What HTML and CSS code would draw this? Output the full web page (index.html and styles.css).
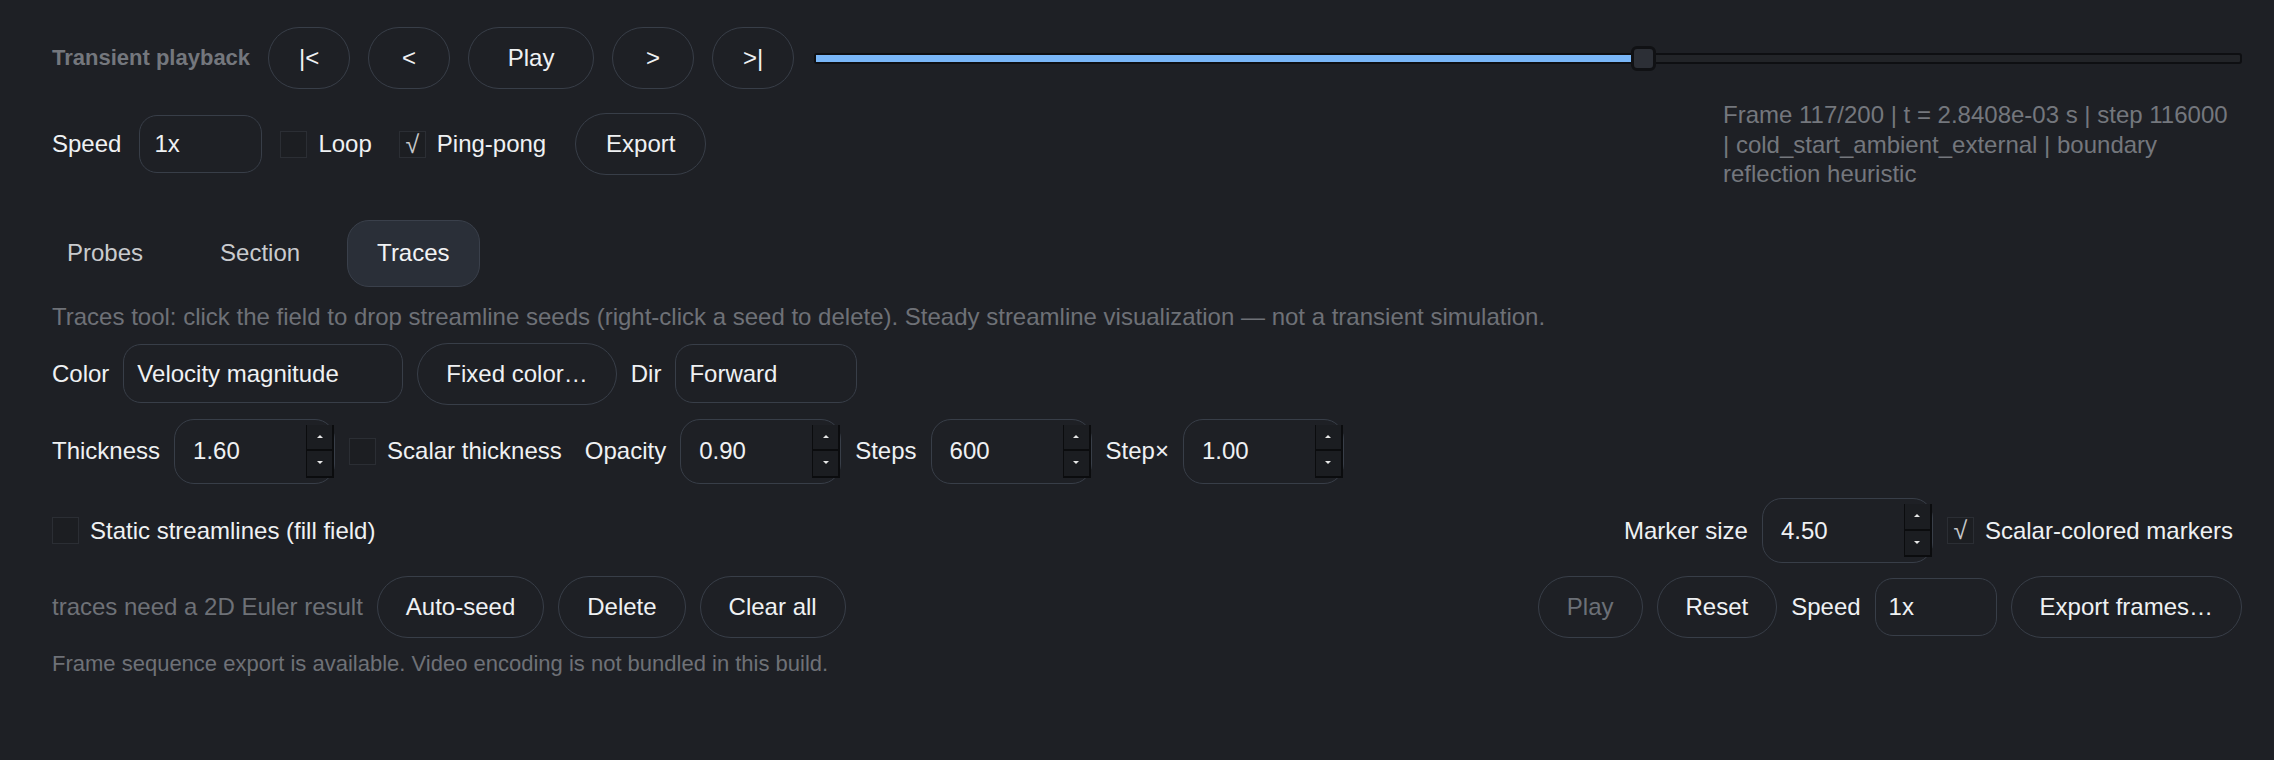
FILE: index.html
```html
<!DOCTYPE html>
<html lang="en">
<head>
    <meta charset="UTF-8">
    <title>Transient playback</title>
    <link rel="stylesheet" href="styles.css">
</head>
<body>
    <div class="panel">
        <div class="playback">
            <span class="pb-title">Transient playback</span>
            <button class="btn btn-sq">|&lt;</button>
            <button class="btn btn-sq">&lt;</button>
            <button class="btn btn-play">Play</button>
            <button class="btn btn-sq">&gt;</button>
            <button class="btn btn-sq">&gt;|</button>
            <div class="scrub">
                <div class="scrub-fill" style="width: 57.2%"></div>
                <div class="scrub-thumb" style="left: 57.2%"></div>
            </div>
        </div>

        <div class="row row-speed">
            <span class="lbl">Speed</span>
            <input class="field field-speed" type="text" value="1x">
            <label class="check"><span class="box"></span>Loop</label>
            <label class="check"><span class="box">√</span>Ping-pong</label>
            <button class="btn btn-export">Export</button>
            <div class="frame-info">Frame 117/200 | t = 2.8408e-03 s | step 116000 | cold_start_ambient_external | boundary reflection heuristic</div>
        </div>

        <div class="tabs">
            <button class="tab">Probes</button>
            <button class="tab">Section</button>
            <button class="tab active">Traces</button>
        </div>

        <p class="hint">Traces tool: click the field to drop streamline seeds (right-click a seed to delete). Steady streamline visualization — not a transient simulation.</p>

        <div class="row row-color">
            <span class="lbl">Color</span>
            <select class="field field-color">
                <option>Velocity magnitude</option>
            </select>
            <button class="btn">Fixed color…</button>
            <span class="lbl">Dir</span>
            <select class="field field-dir">
                <option>Forward</option>
            </select>
        </div>

        <div class="row row-num">
            <span class="lbl">Thickness</span>
            <div class="num"><input class="field field-num" type="text" value="1.60"><div class="spin"><span class="up"></span><span class="down"></span></div></div>
            <label class="check"><span class="box"></span>Scalar thickness</label>
            <span class="lbl">Opacity</span>
            <div class="num"><input class="field field-num" type="text" value="0.90"><div class="spin"><span class="up"></span><span class="down"></span></div></div>
            <span class="lbl">Steps</span>
            <div class="num"><input class="field field-num" type="text" value="600"><div class="spin"><span class="up"></span><span class="down"></span></div></div>
            <span class="lbl">Step×</span>
            <div class="num"><input class="field field-num" type="text" value="1.00"><div class="spin"><span class="up"></span><span class="down"></span></div></div>
        </div>

        <div class="row row-static">
            <label class="check"><span class="box"></span>Static streamlines (fill field)</label>
            <div class="push"></div>
            <span class="lbl">Marker size</span>
            <div class="num num-wide"><input class="field field-num" type="text" value="4.50"><div class="spin"><span class="up"></span><span class="down"></span></div></div>
            <label class="check"><span class="box">√</span>Scalar-colored markers</label>
        </div>

        <div class="row row-actions">
            <span class="muted">traces need a 2D Euler result</span>
            <button class="btn">Auto-seed</button>
            <button class="btn">Delete</button>
            <button class="btn">Clear all</button>
            <div class="push"></div>
            <button class="btn" disabled>Play</button>
            <button class="btn">Reset</button>
            <span class="lbl">Speed</span>
            <input class="field field-speed2" type="text" value="1x">
            <button class="btn">Export frames…</button>
        </div>

        <p class="footnote">Frame sequence export is available. Video encoding is not bundled in this build.</p>
    </div>
</body>
</html>
```

FILE: styles.css
```css
* {
    box-sizing: border-box;
}

body {
    margin: 0;
    background: #1e2025;
    color: #eff1f3;
    font-family: 'Liberation Sans', Arial, sans-serif;
    font-size: 24px;
}

.panel {
    padding: 27px 32px 0 52px;
}

.playback {
    display: flex;
    align-items: center;
    gap: 18px;
    height: 62px;
}

.pb-title {
    font-size: 22px;
    font-weight: bold;
    color: #74777d;
}

.btn {
    height: 62px;
    padding: 0 28px;
    font-family: inherit;
    font-size: 24px;
    color: #eff1f3;
    background: transparent;
    border: 1px solid #383e48;
    border-radius: 31px;
    white-space: nowrap;
}

.btn:disabled {
    color: #6c7077;
}

.btn-sq {
    width: 82px;
    padding: 0;
}

.btn-play {
    width: 126px;
    padding: 0;
}

.btn-export {
    width: 131px;
    margin-left: 2px;
    padding: 0;
}

.scrub {
    position: relative;
    flex: 1;
    height: 11px;
    margin-left: 2px;
    background: #222428;
    border: 2px solid #0e0f12;
    border-radius: 3px;
}

.scrub-fill {
    height: 100%;
    background: #79b6f7;
}

.scrub-thumb {
    position: absolute;
    top: -9px;
    width: 25px;
    height: 25px;
    background: #2c2f36;
    border: 3px solid #101114;
    border-radius: 6px;
}

.row {
    display: flex;
    align-items: center;
    gap: 14px;
}

.row-speed {
    gap: 18px;
    margin-top: 11px;
}

.lbl {
    white-space: nowrap;
}

.field {
    height: 58px;
    padding: 0 13px;
    font-family: inherit;
    font-size: 24px;
    color: #eff1f3;
    background: transparent;
    border: 1px solid #383e48;
    border-radius: 18px;
    outline: none;
    appearance: none;
}

.field-speed {
    width: 123px;
    padding-left: 14px;
}

.field-speed2 {
    width: 122px;
}

.field-color {
    width: 280px;
    height: 59px;
}

.field-dir {
    width: 182px;
    height: 59px;
}

.check {
    display: flex;
    align-items: center;
    gap: 11px;
    margin-right: 9px;
    white-space: nowrap;
}

.box {
    display: flex;
    align-items: center;
    justify-content: center;
    width: 27px;
    height: 27px;
    border: 1px solid #2b2e34;
    background: #1c1e22;
    color: #c4c6c9;
    font-size: 25px;
    line-height: 1;
}

.frame-info {
    width: 512px;
    margin-left: auto;
    margin-right: 7px;
    color: #74777d;
    line-height: 29.5px;
}

.tabs {
    display: flex;
    gap: 17px;
    margin: 31px 0 0 -15px;
}

.tab {
    height: 67px;
    padding: 0 29px;
    font-family: inherit;
    font-size: 24px;
    color: #c9cbce;
    background: transparent;
    border: 1px solid transparent;
    border-radius: 22px;
}

.tab.active {
    color: #f2f3f5;
    background: #2a2f38;
    border-color: #3a404b;
}

.hint {
    margin: 15px 0 0;
    color: #6e7177;
    line-height: 29px;
}

.row-color {
    margin-top: 12px;
}

.row-num {
    margin-top: 14px;
}

.num {
    position: relative;
}

.field-num {
    width: 161px;
    height: 65px;
    padding-left: 18px;
    border-radius: 20px;
}

.num-wide .field-num {
    width: 171px;
}

/* fake spin buttons sitting over the right edge */
.spin {
    position: absolute;
    top: 6px;
    right: 1px;
    display: flex;
    flex-direction: column;
    width: 28px;
    height: 53px;
}

.spin span {
    flex: 1;
    position: relative;
    background: #1b1d21;
    border: 1px solid #0b0c0e;
    border-width: 0 2px 2px 1px;
}

.spin span::after {
    content: '';
    position: absolute;
    left: 50%;
    top: 50%;
    margin: -2px 0 0 -3px;
    border-left: 3px solid transparent;
    border-right: 3px solid transparent;
}

.spin .up::after {
    border-bottom: 3px solid #e8e8e8;
}

.spin .down::after {
    border-top: 3px solid #e8e8e8;
}

.row-static {
    margin-top: 14px;
    height: 66px;
}

.push {
    flex: 1;
}

.row-actions {
    margin-top: 12px;
}

.muted {
    color: #6e7177;
    white-space: nowrap;
}

.footnote {
    margin: 12px 0 0;
    font-size: 22px;
    line-height: 27px;
    color: #6e7177;
}
```
